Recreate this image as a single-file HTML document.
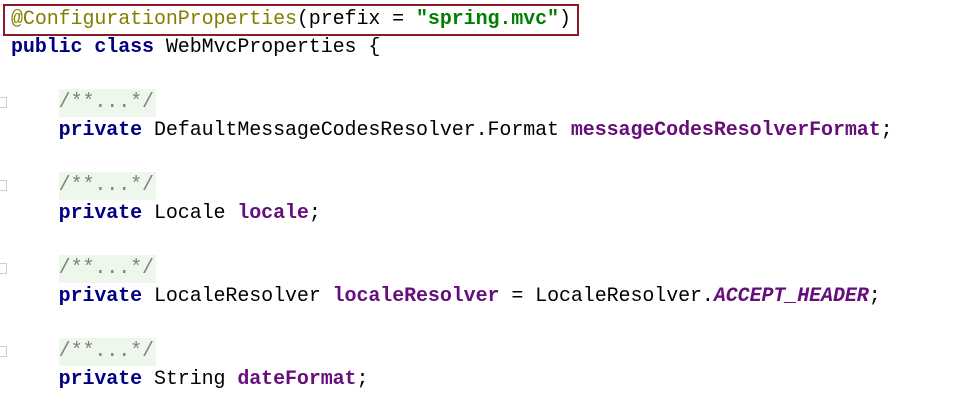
<!DOCTYPE html>
<html><head><style>
body{margin:0;background:#fff;width:976px;height:400px;overflow:hidden;position:relative;font-family:"Liberation Mono",monospace;font-size:20px;letter-spacing:-0.09px;}
.l{position:absolute;left:11px;white-space:pre;line-height:28px;height:28px;color:#000;}
.k{color:#000080;font-weight:bold}
.a{color:#808000}
.s{color:#008000;font-weight:bold}
.f{color:#660e7a;font-weight:bold}
.i{color:#660e7a;font-weight:bold;font-style:italic}
.c{color:#808080;background:#eef7ec;display:inline-block;padding:0 2px 0 0;}
.box{position:absolute;left:3px;top:4px;width:572px;height:28px;border:2px solid #8b1b2b;}
.fold{position:absolute;left:0;width:6px;height:9px;border:1px solid #ccc;border-left:none;background:#fff}
</style></head><body>
<div class="box"></div>
<div class="l" style="top:6px"><span class="a">@ConfigurationProperties</span>(prefix = <span class="s">"spring.mvc"</span>)</div>
<div class="l" style="top:34px"><span class="k">public class</span> WebMvcProperties {</div>
<div class="fold" style="top:97px"></div>
<div class="l" style="top:89px">    <span class="c">/**...*/</span></div>
<div class="l" style="top:117px">    <span class="k">private</span> DefaultMessageCodesResolver.Format <span class="f">messageCodesResolverFormat</span>;</div>
<div class="fold" style="top:180px"></div>
<div class="l" style="top:172px">    <span class="c">/**...*/</span></div>
<div class="l" style="top:200px">    <span class="k">private</span> Locale <span class="f">locale</span>;</div>
<div class="fold" style="top:263px"></div>
<div class="l" style="top:255px">    <span class="c">/**...*/</span></div>
<div class="l" style="top:283px">    <span class="k">private</span> LocaleResolver <span class="f">localeResolver</span> = LocaleResolver.<span class="i">ACCEPT_HEADER</span>;</div>
<div class="fold" style="top:346px"></div>
<div class="l" style="top:338px">    <span class="c">/**...*/</span></div>
<div class="l" style="top:366px">    <span class="k">private</span> String <span class="f">dateFormat</span>;</div>
</body></html>
